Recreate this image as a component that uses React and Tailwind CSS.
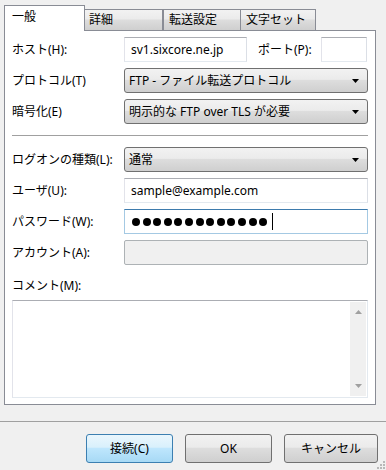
import React from "react";

const font = { fontFamily: '"Noto Sans", "Noto Sans CJK JP", sans-serif' };

function Label({ children, className = "" }) {
  return (
    <div className={"w-[112px] shrink-0 text-[12px] leading-[16px] text-black " + className}>
      {children}
    </div>
  );
}

function TextInput({ children, className = "" }) {
  return (
    <div
      className={
        "h-[25px] flex items-center px-[6px] border border-[#e3e9ef] border-t-[#abadb3] border-l-[#e2e3ea] border-r-[#dbdfe6] bg-white text-[12px] text-black " +
        className
      }
    >
      {children}
    </div>
  );
}

function Select({ children }) {
  return (
    <div className="flex-1 h-[25px] flex items-center pl-[4px] pr-[8px] border border-[#707070] rounded-[3px] bg-[linear-gradient(#f2f2f2_0%,#ebebeb_45%,#dddddd_50%,#cfcfcf_100%)] text-[12px] text-black">
      <span className="flex-1">{children}</span>
      <svg width="7" height="4" viewBox="0 0 7 4">
        <path d="M0 0H7L3.5 4Z" fill="#000" />
      </svg>
    </div>
  );
}

function Row({ children, className = "" }) {
  return <div className={"flex items-center h-[25px] " + className}>{children}</div>;
}

function Button({ children, primary, className = "" }) {
  return (
    <div
      className={
        "h-[29px] flex items-center justify-center rounded-[3px] text-[12px] text-black border " +
        (primary
          ? "border-[#3c7fb1] bg-[linear-gradient(#eaf6fd_0%,#d9f0fc_45%,#bee6fd_50%,#a7d9f5_100%)] "
          : "border-[#707070] bg-[linear-gradient(#f2f2f2_0%,#ebebeb_45%,#dddddd_50%,#cfcfcf_100%)] ") +
        className
      }
    >
      {children}
    </div>
  );
}

const dots = Array.from({ length: 13 });

export default function App() {
  return (
    <div className="w-[386px] h-[470px] bg-[#f0f0f0] relative overflow-hidden" style={font}>
      {/* Tabs */}
      <div className="flex items-end pl-[4px] pt-[4px] h-[30px]">
        <div className="relative z-10 w-[81px] h-[26px] -mb-px bg-white border border-b-0 border-[#898c95] pl-[7px] pt-[3px] text-[12px] leading-[16px] text-black">
          一般
        </div>
        <div className="w-[78px] h-[21px] border border-b-0 border-l-0 border-[#898c95] bg-[linear-gradient(#f2f2f2_0%,#ebebeb_45%,#dddddd_50%,#cfcfcf_100%)] pl-[4px] pt-[2px] text-[12px] leading-[16px] text-black">
          詳細
        </div>
        <div className="w-[78px] h-[21px] border border-b-0 border-[#898c95] bg-[linear-gradient(#f2f2f2_0%,#ebebeb_45%,#dddddd_50%,#cfcfcf_100%)] pl-[5px] pt-[2px] text-[12px] leading-[16px] text-black">
          転送設定
        </div>
        <div className="w-[75px] h-[21px] border border-b-0 border-l-0 border-[#898c95] bg-[linear-gradient(#f2f2f2_0%,#ebebeb_45%,#dddddd_50%,#cfcfcf_100%)] pl-[5px] pt-[2px] text-[12px] leading-[16px] text-black">
          文字セット
        </div>
      </div>

      {/* Panel */}
      <div className="ml-[4px] w-[372px] h-[375px] border border-[#898c95] bg-white pl-[7px] pr-[7px] pt-[6px] flex flex-col">
        <Row>
          <Label>ホスト(H):</Label>
          <TextInput className="w-[123px]">sv1.sixcore.ne.jp</TextInput>
          <div className="ml-[11px] w-[63px] text-[12px] text-black">ポート(P):</div>
          <TextInput className="w-[46px]" />
        </Row>
        <Row className="mt-[6px]">
          <Label>プロトコル(T)</Label>
          <Select>FTP - ファイル転送プロトコル</Select>
        </Row>
        <Row className="mt-[6px]">
          <Label>暗号化(E)</Label>
          <Select>明示的な FTP over TLS が必要</Select>
        </Row>
        <div className="mt-[11px] h-px bg-[#a0a0a0]" />
        <Row className="mt-[11px]">
          <Label>ログオンの種類(L):</Label>
          <Select>通常</Select>
        </Row>
        <Row className="mt-[6px]">
          <Label>ユーザ(U):</Label>
          <TextInput className="flex-1">sample@example.com</TextInput>
        </Row>
        <Row className="mt-[6px]">
          <Label>パスワード(W):</Label>
          <div className="flex-1 h-[25px] flex items-center pl-[7px] border border-[#a4c9e3] border-t-[#3d7bad] bg-white">
            <div className="flex items-center gap-[2.6px]">
              {dots.map((_, i) => (
                <span key={i} className="w-[8px] h-[8px] rounded-full bg-black" />
              ))}
            </div>
            <span className="ml-[5px] w-px h-[17px] bg-black" />
          </div>
        </Row>
        <Row className="mt-[6px]">
          <Label>アカウント(A):</Label>
          <div className="flex-1 h-[25px] border border-[#adb2b5] rounded-[2px] bg-[#f0f0f0]" />
        </Row>
        <div className="mt-[13px] mb-[6px] text-[12px] leading-[16px] text-black">コメント(M):</div>
        <div className="h-[98px] border border-[#e3e9ef] border-t-[#abadb3] border-l-[#e2e3ea] bg-white flex justify-end p-px">
          <div className="w-[16px] h-full bg-[#f0f0f0] flex flex-col items-center justify-between py-[8px]">
            <svg width="7" height="4" viewBox="0 0 7 4">
              <path d="M3.5 0L7 4H0Z" fill="#a0a0a0" />
            </svg>
            <svg width="7" height="4" viewBox="0 0 7 4">
              <path d="M0 0H7L3.5 4Z" fill="#a0a0a0" />
            </svg>
          </div>
        </div>
      </div>

      {/* Bottom separator */}
      <div className="mt-[16px] h-px bg-[#a0a0a0]" />

      {/* Buttons */}
      <div className="flex justify-end gap-[12px] pr-[8px] mt-[12px]">
        <Button primary className="w-[87px]">接続(C)</Button>
        <Button className="w-[87px]">OK</Button>
        <Button className="w-[94px]">キャンセル</Button>
      </div>

      {/* Resize grip */}
      <svg className="absolute right-0 bottom-0" width="12" height="12" viewBox="0 0 12 12">
        {[
          [9, 3],
          [9, 6],
          [6, 6],
          [9, 9],
          [6, 9],
          [3, 9],
        ].map(([x, y], i) => (
          <rect key={i} x={x} y={y} width="2" height="2" fill="#b8b8b8" />
        ))}
      </svg>
    </div>
  );
}
